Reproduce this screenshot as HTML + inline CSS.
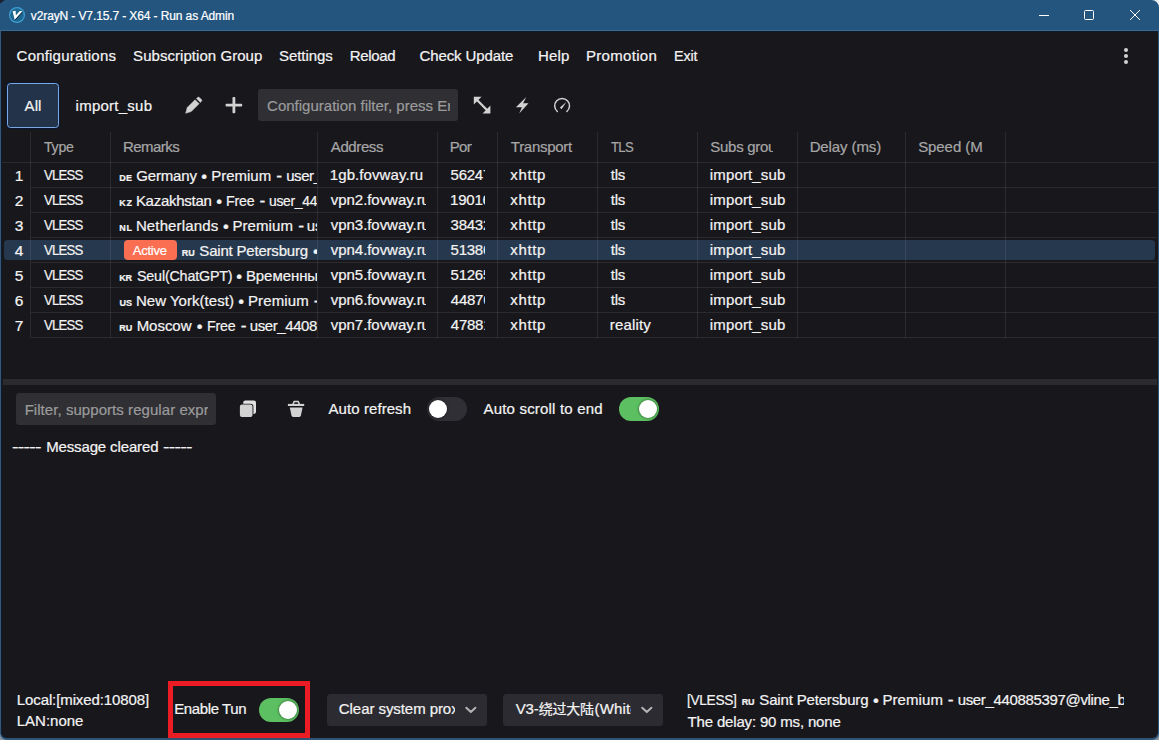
<!DOCTYPE html>
<html lang="en">
<head>
<meta charset="utf-8">
<title>v2rayN - V7.15.7 - X64 - Run as Admin</title>
<style>
html,body{margin:0;padding:0;}
body{width:1159px;height:740px;overflow:hidden;background:#18171c;position:relative;
  font-family:"Liberation Sans","Noto Sans CJK SC",sans-serif;color:#f3f3f3;}
#win{position:absolute;left:0;top:0;width:1159px;height:740px;overflow:hidden;background:#18171c;}
.a{position:absolute;}
.tx{position:absolute;white-space:pre;line-height:20px;height:20px;display:inline-block;transform-origin:0 50%;-webkit-text-stroke:0.22px currentColor;}
.clip{position:absolute;left:0;top:0;height:740px;overflow:hidden;}
svg{position:absolute;overflow:visible;}
</style>
</head>
<body>
<div id="win">
<div class="a" style="left:0;top:0;width:1159px;height:31px;background:#23557f"></div>
<div class="a" style="left:0;top:31px;width:1159px;height:709px;background:#2e5478"></div>
<div class="a" style="left:0;top:31px;width:1px;height:709px;background:#33587c"></div>
<div class="a" style="left:1px;top:31px;width:1156.6px;height:707px;background:#18171c;border-radius:0 0 6px 6px;box-shadow:inset 1px 0 0 #101c2a"></div>
<div class="a" style="left:0;top:30px;width:1159px;height:1px;background:#3c688f"></div>
<div class="a" style="left:1px;top:31px;width:1157px;height:1px;background:#0d1b29"></div>
<svg width="1159" height="740" style="left:0;top:0">
  <path d="M0 0H5L0 3.5Z" fill="#1a2230"/>
  <path d="M1159 0V7.5A7.5 7.5 0 0 0 1151.5 0Z" fill="#e9eef3"/>
  <path d="M1159 740V733A7 7 0 0 1 1152 740Z" fill="#8494a4"/>
  <path d="M0 740V733A7 7 0 0 0 7 740Z" fill="#8494a4"/>
  <!-- app icon -->
  <circle cx="17" cy="15" r="8" fill="#3f9fd2"/>
  <circle cx="17" cy="15" r="6.8" fill="#1d6791"/>
  <path d="M12.6 11.3L15.6 10.8L15.9 15.3L19.9 11L22.5 11.2L14.7 19.8Z" fill="#ffffff"/>
  <path d="M15.3 19.9L22.9 11.6" stroke="#0d2233" stroke-width="0.9" fill="none"/>
  <!-- caption buttons -->
  <path d="M1039 15.5H1049" stroke="#fff" stroke-width="1"/>
  <rect x="1084.5" y="10.5" width="9" height="9" rx="1" fill="none" stroke="#fff" stroke-width="1"/>
  <path d="M1130 10L1140 20M1140 10L1130 20" stroke="#fff" stroke-width="1"/>
  <!-- kebab -->
  <circle cx="1126" cy="50" r="2" fill="#d2d2d2"/><circle cx="1126" cy="56" r="2" fill="#d2d2d2"/><circle cx="1126" cy="62" r="2" fill="#d2d2d2"/>
</svg>
<span class="tx" style="left:30.80px;top:5.80px;font-size:12px;letter-spacing:-0.112px;color:#ffffff;">v2rayN - V7.15.7 - X64 - Run as Admin </span>
<!-- menu -->
<span class="tx" style="left:16.60px;top:45.50px;font-size:15px;letter-spacing:0.200px;color:#f3f3f3;">Configurations </span>
<span class="tx" style="left:133.08px;top:45.50px;font-size:15px;letter-spacing:0.049px;color:#f3f3f3;">Subscription Group </span>
<span class="tx" style="left:279.08px;top:45.50px;font-size:15px;letter-spacing:-0.087px;color:#f3f3f3;">Settings </span>
<span class="tx" style="left:349.63px;top:45.50px;font-size:15px;letter-spacing:-0.324px;color:#f3f3f3;">Reload </span>
<span class="tx" style="left:419.60px;top:45.50px;font-size:15px;letter-spacing:-0.122px;color:#f3f3f3;">Check Update </span>
<span class="tx" style="left:537.88px;top:45.50px;font-size:15px;letter-spacing:0.193px;color:#f3f3f3;">Help </span>
<span class="tx" style="left:585.88px;top:45.50px;font-size:15px;letter-spacing:0.319px;color:#f3f3f3;">Promotion </span>
<span class="tx" style="left:673.68px;top:45.50px;font-size:15px;letter-spacing:-0.155px;color:#f3f3f3;transform:scaleX(0.956);">Exit </span>
<div class="a" style="left:7px;top:83px;width:50px;height:43px;border:1px solid #7aaae6;border-radius:3.5px;background:#23344a;box-shadow:0 0 0 1px rgba(0,22,64,0.55)"></div>
<span class="tx" style="left:24.55px;top:95.75px;font-size:15px;letter-spacing:0.109px;color:#f3f3f3;">All </span>
<span class="tx" style="left:75.61px;top:95.50px;font-size:15px;letter-spacing:0.249px;color:#f3f3f3;">import_sub </span>
<div class="a" style="left:258px;top:89px;width:200px;height:32px;border-radius:3px;background:#2f2f34"></div>
<div class="clip" style="width:449.6px"><span class="tx" style="left:267.10px;top:95.50px;font-size:15px;color:#9b9b9b;">Configuration filter, press Enter </span></div>
<svg width="1159" height="740" style="left:0;top:0" fill="#d2d2d2">
  <!-- pencil -->
  <path d="M185.7 113.3L187.2 107.6L195.1 99.7L199.1 103.7L191.2 111.6Z" stroke="#d2d2d2" stroke-width="0.5" stroke-linejoin="round"/>
  <path d="M196.5 98.5L197.7 97.4Q198.5 96.7 199.3 97.4L201.5 99.6Q202.3 100.4 201.5 101.2L200.4 102.4Z" stroke="#d2d2d2" stroke-width="0.5" stroke-linejoin="round"/>
  <!-- plus -->
  <rect x="225.6" y="103.8" width="16.6" height="2.6" rx="0.9"/><rect x="232.5" y="96.9" width="2.8" height="16.3" rx="0.9"/>
  <!-- expand -->
  <path d="M473.8 96.8H481.6L473.8 104.6Z"/><path d="M490.4 113.4H482.6L490.4 105.6Z"/>
  <path d="M477 100L487.2 110.2" stroke="#d2d2d2" stroke-width="2.3" fill="none"/>
  <!-- bolt -->
  <path d="M526.3 96.9L515.9 107.3H521.9L519.2 113.4L528.5 103.3H523.1Z"/>
  <!-- gauge -->
  <path d="M557.35 111.5A7.4 7.4 0 1 1 566.85 111.5" fill="none" stroke="#d2d2d2" stroke-width="1.5" stroke-linecap="round"/>
  <path d="M559.9 107.6L566.3 102L561.6 109.2Z"/>
</svg>
<div class="a" style="left:4px;top:239.6px;width:1151.2px;height:20.7px;border-radius:3.5px;background:#26384d"></div>
<div class="a" style="left:2px;top:162px;width:1155px;height:1px;background:rgba(255,255,255,0.082)"></div>
<div class="a" style="left:31px;top:187px;width:1126px;height:1px;background:rgba(255,255,255,0.082)"></div>
<div class="a" style="left:31px;top:212px;width:1126px;height:1px;background:rgba(255,255,255,0.082)"></div>
<div class="a" style="left:31px;top:237px;width:1126px;height:1px;background:rgba(255,255,255,0.082)"></div>
<div class="a" style="left:31px;top:262px;width:1126px;height:1px;background:rgba(255,255,255,0.082)"></div>
<div class="a" style="left:31px;top:287px;width:1126px;height:1px;background:rgba(255,255,255,0.082)"></div>
<div class="a" style="left:31px;top:312px;width:1126px;height:1px;background:rgba(255,255,255,0.082)"></div>
<div class="a" style="left:31px;top:337px;width:1126px;height:1px;background:rgba(255,255,255,0.082)"></div>
<div class="a" style="left:30px;top:132px;width:1px;height:206px;background:rgba(255,255,255,0.082)"></div>
<div class="a" style="left:110px;top:132px;width:1px;height:206px;background:rgba(255,255,255,0.082)"></div>
<div class="a" style="left:317px;top:132px;width:1px;height:206px;background:rgba(255,255,255,0.082)"></div>
<div class="a" style="left:437px;top:132px;width:1px;height:206px;background:rgba(255,255,255,0.082)"></div>
<div class="a" style="left:497px;top:132px;width:1px;height:206px;background:rgba(255,255,255,0.082)"></div>
<div class="a" style="left:597px;top:132px;width:1px;height:206px;background:rgba(255,255,255,0.082)"></div>
<div class="a" style="left:697px;top:132px;width:1px;height:206px;background:rgba(255,255,255,0.082)"></div>
<div class="a" style="left:797px;top:132px;width:1px;height:206px;background:rgba(255,255,255,0.082)"></div>
<div class="a" style="left:905px;top:132px;width:1px;height:206px;background:rgba(255,255,255,0.082)"></div>
<div class="a" style="left:1005px;top:132px;width:1px;height:206px;background:rgba(255,255,255,0.082)"></div>
<span class="tx" style="left:44.33px;top:136.50px;font-size:15px;letter-spacing:-0.268px;color:#a6a6a6;transform:scaleX(0.944);">Type </span>
<span class="tx" style="left:122.88px;top:136.50px;font-size:15px;letter-spacing:-0.536px;color:#a6a6a6;">Remarks </span>
<span class="tx" style="left:330.80px;top:136.50px;font-size:15px;letter-spacing:-0.401px;color:#a6a6a6;">Address </span>
<div class="clip" style="width:472.2px"><span class="tx" style="left:449.63px;top:136.50px;font-size:15px;letter-spacing:-0.599px;color:#a6a6a6;">Port </span></div>
<span class="tx" style="left:510.82px;top:136.50px;font-size:15px;letter-spacing:-0.287px;color:#a6a6a6;">Transport </span>
<span class="tx" style="left:610.59px;top:136.50px;font-size:15px;letter-spacing:-0.813px;color:#a6a6a6;transform:scaleX(0.875);">TLS </span>
<div class="clip" style="width:773px"><span class="tx" style="left:710.33px;top:136.50px;font-size:15px;letter-spacing:-0.294px;color:#a6a6a6;">Subs group </span></div>
<span class="tx" style="left:809.63px;top:136.50px;font-size:15px;letter-spacing:-0.106px;color:#a6a6a6;">Delay (ms) </span>
<div class="clip" style="width:982.6px"><span class="tx" style="left:918.13px;top:136.50px;font-size:15px;letter-spacing:-0.065px;color:#a6a6a6;">Speed (M/s) </span></div>
<!-- row 1 -->
<span class="tx" style="left:14.70px;top:165.50px;font-size:15.5px;color:#f3f3f3;">1 </span><span class="tx" style="left:44.05px;top:164.50px;font-size:15.5px;letter-spacing:-0.943px;color:#f3f3f3;transform:scaleX(0.849);">VLESS </span>
<div class="clip" style="width:317.4px"><span class="tx" style="left:119.24px;top:168.00px;font-size:9px;letter-spacing:0.297px;color:#f3f3f3;font-weight:700;">DE </span><span class="tx" style="left:136.35px;top:165.50px;font-size:15px;letter-spacing:-0.189px;color:#f3f3f3;">Germany </span><span class="tx" style="left:201.25px;top:166.80px;font-size:16.6px;color:#f3f3f3;">• </span><span class="tx" style="left:211.13px;top:165.50px;font-size:15px;letter-spacing:0.015px;color:#f3f3f3;">Premium </span><span class="tx" style="left:276.23px;top:166.30px;font-size:17.5px;color:#f3f3f3;">- </span><span class="tx" style="left:286.16px;top:165.50px;font-size:15px;letter-spacing:-0.423px;color:#f3f3f3;">user_440885397@vline_bot </span></div>
<div class="clip" style="width:425.6px"><span class="tx" style="left:329.86px;top:164.50px;font-size:15px;letter-spacing:0.076px;color:#f3f3f3;">1gb.fovway.ru </span></div><div class="clip" style="width:484.6px"><span class="tx" style="left:450.58px;top:164.50px;font-size:15px;letter-spacing:-0.250px;color:#f3f3f3;">56247 </span></div><span class="tx" style="left:510.30px;top:164.50px;font-size:15px;letter-spacing:0.622px;color:#f3f3f3;">xhttp </span><span class="tx" style="left:610.80px;top:164.50px;font-size:15px;letter-spacing:-0.316px;color:#f3f3f3;">tls </span><span class="tx" style="left:709.86px;top:164.50px;font-size:15px;letter-spacing:0.138px;color:#f3f3f3;">import_sub </span>
<!-- row 2 -->
<span class="tx" style="left:14.70px;top:190.50px;font-size:15.5px;color:#f3f3f3;">2 </span><span class="tx" style="left:44.05px;top:189.50px;font-size:15.5px;letter-spacing:-0.943px;color:#f3f3f3;transform:scaleX(0.849);">VLESS </span>
<div class="clip" style="width:317.4px"><span class="tx" style="left:119.24px;top:193.00px;font-size:9px;letter-spacing:0.719px;color:#f3f3f3;font-weight:700;">KZ </span><span class="tx" style="left:135.88px;top:190.50px;font-size:15px;letter-spacing:-0.274px;color:#f3f3f3;">Kazakhstan </span><span class="tx" style="left:216.25px;top:191.80px;font-size:16.6px;color:#f3f3f3;">• </span><span class="tx" style="left:225.94px;top:190.50px;font-size:15px;letter-spacing:-0.228px;color:#f3f3f3;transform:scaleX(0.948);">Free </span><span class="tx" style="left:259.48px;top:191.30px;font-size:17.5px;color:#f3f3f3;">- </span><span class="tx" style="left:268.68px;top:190.50px;font-size:15px;letter-spacing:-0.311px;color:#f3f3f3;transform:scaleX(0.924);">user_440885397@vline_bot </span></div>
<div class="clip" style="width:425.6px"><span class="tx" style="left:330.80px;top:189.50px;font-size:15px;letter-spacing:-0.048px;color:#f3f3f3;">vpn2.fovway.ru </span></div><div class="clip" style="width:484.6px"><span class="tx" style="left:450.11px;top:189.50px;font-size:15px;letter-spacing:-0.250px;color:#f3f3f3;">19016 </span></div><span class="tx" style="left:510.30px;top:189.50px;font-size:15px;letter-spacing:0.622px;color:#f3f3f3;">xhttp </span><span class="tx" style="left:610.80px;top:189.50px;font-size:15px;letter-spacing:-0.316px;color:#f3f3f3;">tls </span><span class="tx" style="left:709.86px;top:189.50px;font-size:15px;letter-spacing:0.138px;color:#f3f3f3;">import_sub </span>
<!-- row 3 -->
<span class="tx" style="left:14.70px;top:215.50px;font-size:15.5px;color:#f3f3f3;">3 </span><span class="tx" style="left:44.05px;top:214.50px;font-size:15.5px;letter-spacing:-0.943px;color:#f3f3f3;transform:scaleX(0.849);">VLESS </span>
<div class="clip" style="width:317.4px"><span class="tx" style="left:119.24px;top:218.00px;font-size:9px;letter-spacing:0.719px;color:#f3f3f3;font-weight:700;">NL </span><span class="tx" style="left:135.88px;top:215.50px;font-size:15px;letter-spacing:0.141px;color:#f3f3f3;">Netherlands </span><span class="tx" style="left:223.00px;top:216.80px;font-size:16.6px;color:#f3f3f3;">• </span><span class="tx" style="left:232.38px;top:215.50px;font-size:15px;letter-spacing:0.098px;color:#f3f3f3;">Premium </span><span class="tx" style="left:298.23px;top:216.30px;font-size:17.5px;color:#f3f3f3;">- </span><span class="tx" style="left:306.86px;top:215.50px;font-size:15px;letter-spacing:-0.120px;color:#f3f3f3;">user_440885397@vline_bot </span></div>
<div class="clip" style="width:425.6px"><span class="tx" style="left:330.80px;top:214.50px;font-size:15px;letter-spacing:-0.048px;color:#f3f3f3;">vpn3.fovway.ru </span></div><div class="clip" style="width:484.6px"><span class="tx" style="left:450.58px;top:214.50px;font-size:15px;letter-spacing:-0.250px;color:#f3f3f3;">38432 </span></div><span class="tx" style="left:510.30px;top:214.50px;font-size:15px;letter-spacing:0.622px;color:#f3f3f3;">xhttp </span><span class="tx" style="left:610.80px;top:214.50px;font-size:15px;letter-spacing:-0.316px;color:#f3f3f3;">tls </span><span class="tx" style="left:709.86px;top:214.50px;font-size:15px;letter-spacing:0.138px;color:#f3f3f3;">import_sub </span>
<!-- row 4 -->
<span class="tx" style="left:14.70px;top:240.50px;font-size:15.5px;color:#f3f3f3;">4 </span><span class="tx" style="left:44.05px;top:239.50px;font-size:15.5px;letter-spacing:-0.943px;color:#f3f3f3;transform:scaleX(0.849);">VLESS </span>
<div class="a" style="left:123.7px;top:240.1px;width:52.9px;height:19.9px;border-radius:4px;background:#fa6e52"></div><span class="tx" style="left:132.80px;top:241.00px;font-size:13px;letter-spacing:-0.245px;color:#ffffff;">Active </span>
<div class="clip" style="width:317.4px"><span class="tx" style="left:181.74px;top:243.00px;font-size:9px;letter-spacing:0.016px;color:#f3f3f3;font-weight:700;">RU </span><span class="tx" style="left:199.33px;top:240.50px;font-size:15px;letter-spacing:-0.201px;color:#f3f3f3;">Saint Petersburg </span><span class="tx" style="left:313.00px;top:241.80px;font-size:16.6px;color:#f3f3f3;">• </span><span class="tx" style="left:322.13px;top:240.50px;font-size:15px;letter-spacing:-0.120px;color:#f3f3f3;">Premium - user_440885397@vline_bot </span></div>
<div class="clip" style="width:425.6px"><span class="tx" style="left:330.80px;top:239.50px;font-size:15px;letter-spacing:-0.048px;color:#f3f3f3;">vpn4.fovway.ru </span></div><div class="clip" style="width:484.6px"><span class="tx" style="left:450.58px;top:239.50px;font-size:15px;letter-spacing:-0.250px;color:#f3f3f3;">51386 </span></div><span class="tx" style="left:510.30px;top:239.50px;font-size:15px;letter-spacing:0.622px;color:#f3f3f3;">xhttp </span><span class="tx" style="left:610.80px;top:239.50px;font-size:15px;letter-spacing:-0.316px;color:#f3f3f3;">tls </span><span class="tx" style="left:709.86px;top:239.50px;font-size:15px;letter-spacing:0.138px;color:#f3f3f3;">import_sub </span>
<!-- row 5 -->
<span class="tx" style="left:14.70px;top:265.50px;font-size:15.5px;color:#f3f3f3;">5 </span><span class="tx" style="left:44.05px;top:264.50px;font-size:15.5px;letter-spacing:-0.943px;color:#f3f3f3;transform:scaleX(0.849);">VLESS </span>
<div class="clip" style="width:317.4px"><span class="tx" style="left:119.24px;top:268.00px;font-size:9px;letter-spacing:-0.265px;color:#f3f3f3;font-weight:700;">KR </span><span class="tx" style="left:136.60px;top:265.50px;font-size:15px;letter-spacing:-0.181px;color:#f3f3f3;transform:scaleX(0.952);">Seul(ChatGPT) </span><span class="tx" style="left:236.25px;top:266.80px;font-size:16.6px;color:#f3f3f3;">• </span><span class="tx" style="left:245.88px;top:265.50px;font-size:15px;letter-spacing:-0.062px;color:#f3f3f3;">Временный - user_440885397@vline_bot </span></div>
<div class="clip" style="width:425.6px"><span class="tx" style="left:330.80px;top:264.50px;font-size:15px;letter-spacing:-0.048px;color:#f3f3f3;">vpn5.fovway.ru </span></div><div class="clip" style="width:484.6px"><span class="tx" style="left:450.58px;top:264.50px;font-size:15px;letter-spacing:-0.250px;color:#f3f3f3;">51265 </span></div><span class="tx" style="left:510.30px;top:264.50px;font-size:15px;letter-spacing:0.622px;color:#f3f3f3;">xhttp </span><span class="tx" style="left:610.80px;top:264.50px;font-size:15px;letter-spacing:-0.316px;color:#f3f3f3;">tls </span><span class="tx" style="left:709.86px;top:264.50px;font-size:15px;letter-spacing:0.138px;color:#f3f3f3;">import_sub </span>
<!-- row 6 -->
<span class="tx" style="left:14.70px;top:290.50px;font-size:15.5px;color:#f3f3f3;">6 </span><span class="tx" style="left:44.05px;top:289.50px;font-size:15.5px;letter-spacing:-0.943px;color:#f3f3f3;transform:scaleX(0.849);">VLESS </span>
<div class="clip" style="width:317.4px"><span class="tx" style="left:119.38px;top:293.00px;font-size:9px;letter-spacing:0.157px;color:#f3f3f3;font-weight:700;">US </span><span class="tx" style="left:135.88px;top:290.50px;font-size:15px;letter-spacing:0.042px;color:#f3f3f3;">New York(test) </span><span class="tx" style="left:238.25px;top:291.80px;font-size:16.6px;color:#f3f3f3;">• </span><span class="tx" style="left:247.88px;top:290.50px;font-size:15px;letter-spacing:0.140px;color:#f3f3f3;">Premium </span><span class="tx" style="left:313.73px;top:291.30px;font-size:17.5px;color:#f3f3f3;">- </span><span class="tx" style="left:322.86px;top:290.50px;font-size:15px;letter-spacing:-0.120px;color:#f3f3f3;">user_440885397@vline_bot </span></div>
<div class="clip" style="width:425.6px"><span class="tx" style="left:330.80px;top:289.50px;font-size:15px;letter-spacing:-0.048px;color:#f3f3f3;">vpn6.fovway.ru </span></div><div class="clip" style="width:484.6px"><span class="tx" style="left:450.82px;top:289.50px;font-size:15px;letter-spacing:-0.250px;color:#f3f3f3;">44876 </span></div><span class="tx" style="left:510.30px;top:289.50px;font-size:15px;letter-spacing:0.622px;color:#f3f3f3;">xhttp </span><span class="tx" style="left:610.80px;top:289.50px;font-size:15px;letter-spacing:-0.316px;color:#f3f3f3;">tls </span><span class="tx" style="left:709.86px;top:289.50px;font-size:15px;letter-spacing:0.138px;color:#f3f3f3;">import_sub </span>
<!-- row 7 -->
<span class="tx" style="left:14.70px;top:315.50px;font-size:15.5px;color:#f3f3f3;">7 </span><span class="tx" style="left:44.05px;top:314.50px;font-size:15.5px;letter-spacing:-0.943px;color:#f3f3f3;transform:scaleX(0.849);">VLESS </span>
<div class="clip" style="width:317.4px"><span class="tx" style="left:119.24px;top:318.00px;font-size:9px;letter-spacing:0.016px;color:#f3f3f3;font-weight:700;">RU </span><span class="tx" style="left:136.63px;top:315.50px;font-size:15px;letter-spacing:-0.025px;color:#f3f3f3;">Moscow </span><span class="tx" style="left:196.75px;top:316.80px;font-size:16.6px;color:#f3f3f3;">• </span><span class="tx" style="left:206.69px;top:315.50px;font-size:15px;letter-spacing:-0.228px;color:#f3f3f3;transform:scaleX(0.948);">Free </span><span class="tx" style="left:240.73px;top:316.30px;font-size:17.5px;color:#f3f3f3;">- </span><span class="tx" style="left:249.86px;top:315.50px;font-size:15px;letter-spacing:-0.431px;color:#f3f3f3;">user_440885397@vline_bot </span></div>
<div class="clip" style="width:425.6px"><span class="tx" style="left:330.80px;top:314.50px;font-size:15px;letter-spacing:-0.048px;color:#f3f3f3;">vpn7.fovway.ru </span></div><div class="clip" style="width:484.6px"><span class="tx" style="left:450.82px;top:314.50px;font-size:15px;letter-spacing:-0.250px;color:#f3f3f3;">47881 </span></div><span class="tx" style="left:510.30px;top:314.50px;font-size:15px;letter-spacing:0.622px;color:#f3f3f3;">xhttp </span><span class="tx" style="left:609.86px;top:314.50px;font-size:15px;letter-spacing:0.138px;color:#f3f3f3;">reality </span><span class="tx" style="left:709.86px;top:314.50px;font-size:15px;letter-spacing:0.138px;color:#f3f3f3;">import_sub </span>
<div class="a" style="left:3px;top:379px;width:1154px;height:6px;background:#2b2a2f"></div>
<div class="a" style="left:16px;top:393px;width:199.8px;height:32px;border-radius:3px;background:#2f2f34"></div>
<div class="clip" style="width:207.5px"><span class="tx" style="left:24.63px;top:399.50px;font-size:15px;letter-spacing:0.055px;color:#9b9b9b;">Filter, supports regular expression </span></div>
<svg width="1159" height="740" style="left:0;top:0" fill="#d2d2d2">
  <!-- copy -->
  <rect x="243.2" y="400.6" width="12.8" height="13.4" rx="2.2" fill="#e2e2e2"/>
  <rect x="239" y="403.7" width="14.4" height="14.3" rx="2.8" fill="#18171c"/>
  <rect x="239.9" y="404.6" width="12.6" height="12.5" rx="2"/>
  <!-- trash -->
  <path d="M287.9 403.9H304.2V406H287.9Z"/>
  <path d="M292.3 404L293.7 400.8H298.7L300.1 404H298.4L297.7 402.3H294.7L294 404Z"/>
  <path d="M289.8 407.4H302.6L300.9 415.6Q300.6 416.9 299.3 416.9H293.1Q291.8 416.9 291.5 415.6Z"/>
</svg>
<span class="tx" style="left:328.55px;top:398.75px;font-size:15px;letter-spacing:0.071px;color:#f3f3f3;">Auto refresh </span>
<div class="a" style="left:427.1px;top:397px;width:40px;height:24px;border-radius:12px;background:#302f35"></div>
<div class="a" style="left:428.80px;top:399.80px;width:18.4px;height:18.4px;border-radius:50%;background:#ffffff;box-shadow:0 0 2px 1px rgba(0,0,0,0.28)"></div>
<span class="tx" style="left:483.55px;top:398.75px;font-size:15px;letter-spacing:0.182px;color:#f3f3f3;">Auto scroll to end </span>
<div class="a" style="left:618.8px;top:397px;width:40px;height:24px;border-radius:12px;background:#5cbf61"></div>
<div class="a" style="left:638.70px;top:399.80px;width:18.4px;height:18.4px;border-radius:50%;background:#ffffff;box-shadow:0 0 2px 1px rgba(0,0,0,0.28)"></div>
<span class="tx" style="left:12.19px;top:436.90px;font-size:15px;letter-spacing:-0.578px;color:#f3f3f3;transform:scaleX(1.300);">----- </span><span class="tx" style="left:46.13px;top:436.90px;font-size:15px;letter-spacing:-0.130px;color:#f3f3f3;">Message cleared </span><span class="tx" style="left:163.44px;top:436.90px;font-size:15px;letter-spacing:-0.578px;color:#f3f3f3;transform:scaleX(1.300);">----- </span>
<span class="tx" style="left:16.78px;top:689.50px;font-size:15px;letter-spacing:-0.102px;color:#f3f3f3;">Local:[mixed:10808] </span>
<span class="tx" style="left:16.78px;top:710.50px;font-size:15px;letter-spacing:-0.012px;color:#f3f3f3;">LAN:none </span>
<div class="a" style="left:168.1px;top:681.1px;width:132.1px;height:46.9px;border:5px solid #ec1c24"></div>
<span class="tx" style="left:174.13px;top:699.30px;font-size:15px;letter-spacing:-0.372px;color:#f3f3f3;">Enable Tun </span>
<div class="a" style="left:259.05px;top:698px;width:40px;height:24px;border-radius:12px;background:#5cbf61"></div>
<div class="a" style="left:278.90px;top:700.80px;width:18.4px;height:18.4px;border-radius:50%;background:#ffffff;box-shadow:0 0 2px 1px rgba(0,0,0,0.28)"></div>
<div class="a" style="left:327px;top:694.2px;width:159.8px;height:32px;border-radius:3.5px;background:#2c2b31"></div>
<div class="clip" style="width:454.8px"><span class="tx" style="left:338.85px;top:699.20px;font-size:15px;letter-spacing:-0.067px;color:#f3f3f3;">Clear system proxy </span></div>
<div class="a" style="left:503px;top:694.2px;width:160.1px;height:32px;border-radius:3.5px;background:#2c2b31"></div>
<div class="clip" style="width:631.2px"><span class="tx" style="left:515.70px;top:699.20px;font-size:15px;letter-spacing:-0.200px;color:#f3f3f3;">V3-</span><span class="tx" style="left:538.76px;top:698.70px;font-size:14px;letter-spacing:-0.242px;color:#f3f3f3;">绕过大陆</span><span class="tx" style="left:594.60px;top:699.20px;font-size:15px;letter-spacing:0.139px;color:#f3f3f3;">(Whitelist) </span></div>
<svg width="1159" height="740" style="left:0;top:0" fill="none" stroke="#b4b4b4" stroke-width="2" stroke-linecap="round" stroke-linejoin="round">
  <path d="M466.3 707.7L470.85 712L475.4 707.7"/>
  <path d="M642.2 707.7L646.8 712L651.4 707.7"/>
</svg>
<div class="clip" style="width:1123.8px"><span class="tx" style="left:686.94px;top:689.50px;font-size:15px;letter-spacing:-0.368px;color:#f3f3f3;transform:scaleX(0.914);">[VLESS] </span><span class="tx" style="left:741.74px;top:692.00px;font-size:9px;letter-spacing:-0.334px;color:#f3f3f3;font-weight:700;">RU </span><span class="tx" style="left:759.33px;top:689.50px;font-size:15px;letter-spacing:-0.168px;color:#f3f3f3;">Saint Petersburg </span><span class="tx" style="left:873.00px;top:690.80px;font-size:16.6px;color:#f3f3f3;">• </span><span class="tx" style="left:882.38px;top:689.50px;font-size:15px;letter-spacing:0.098px;color:#f3f3f3;">Premium </span><span class="tx" style="left:947.73px;top:690.30px;font-size:17.5px;color:#f3f3f3;">- </span><span class="tx" style="left:957.66px;top:689.50px;font-size:15px;letter-spacing:-0.336px;color:#f3f3f3;">user_440885397@vline_bot </span></div>
<span class="tx" style="left:687.57px;top:711.50px;font-size:15px;letter-spacing:-0.168px;color:#f3f3f3;">The delay: 90 ms, none </span>
</div>
</body>
</html>
